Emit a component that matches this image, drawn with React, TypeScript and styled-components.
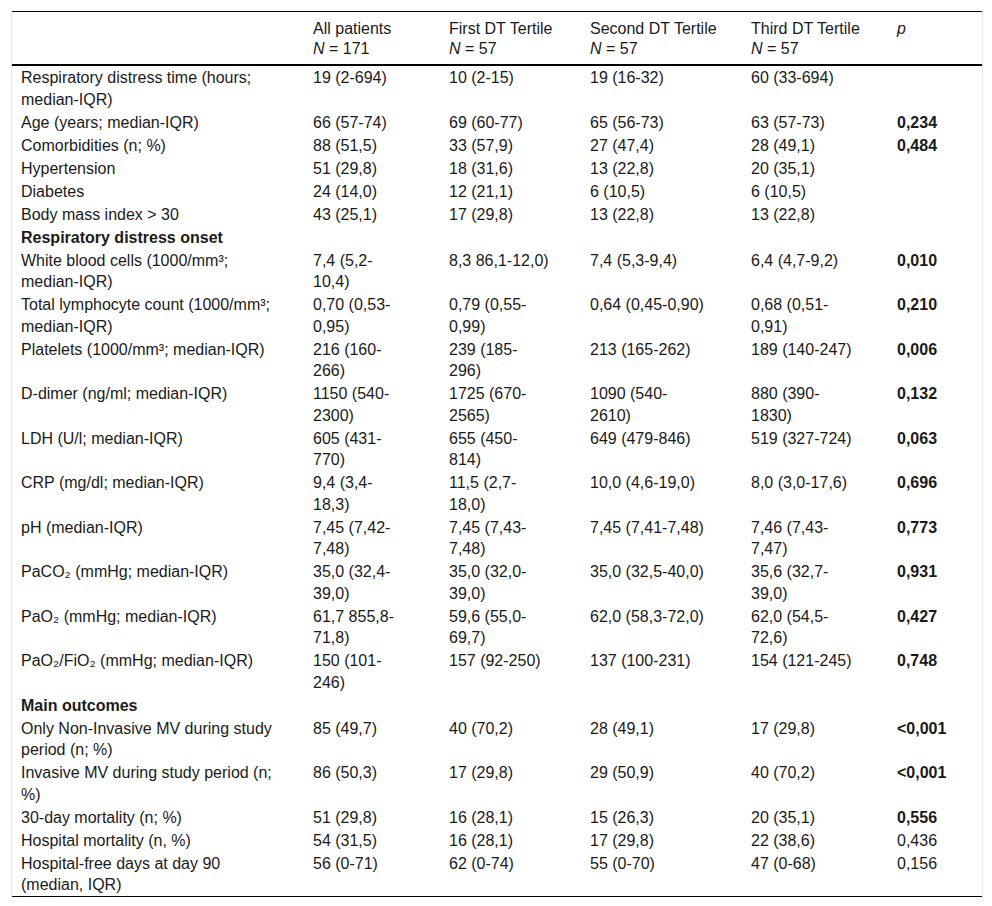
import React from 'react';
import styled, {createGlobalStyle} from "styled-components";

type Row =
    | { kind: 'section'; label: string }
    | { kind: 'data'; label: string; values: string[]; p?: string; bold?: boolean };

const rows: Row[] = [
    {kind: 'data', label: 'Respiratory distress time (hours; median-IQR)', values: ['19 (2-694)', '10 (2-15)', '19 (16-32)', '60 (33-694)']},
    {kind: 'data', label: 'Age (years; median-IQR)', values: ['66 (57-74)', '69 (60-77)', '65 (56-73)', '63 (57-73)'], p: '0,234', bold: true},
    {kind: 'data', label: 'Comorbidities (n; %)', values: ['88 (51,5)', '33 (57,9)', '27 (47,4)', '28 (49,1)'], p: '0,484', bold: true},
    {kind: 'data', label: 'Hypertension', values: ['51 (29,8)', '18 (31,6)', '13 (22,8)', '20 (35,1)']},
    {kind: 'data', label: 'Diabetes', values: ['24 (14,0)', '12 (21,1)', '6 (10,5)', '6 (10,5)']},
    {kind: 'data', label: 'Body mass index > 30', values: ['43 (25,1)', '17 (29,8)', '13 (22,8)', '13 (22,8)']},
    {kind: 'section', label: 'Respiratory distress onset'},
    {kind: 'data', label: 'White blood cells (1000/mm³; median-IQR)', values: ['7,4 (5,2-10,4)', '8,3 86,1-12,0)', '7,4 (5,3-9,4)', '6,4 (4,7-9,2)'], p: '0,010', bold: true},
    {kind: 'data', label: 'Total lymphocyte count (1000/mm³; median-IQR)', values: ['0,70 (0,53-0,95)', '0,79 (0,55-0,99)', '0,64 (0,45-0,90)', '0,68 (0,51-0,91)'], p: '0,210', bold: true},
    {kind: 'data', label: 'Platelets (1000/mm³; median-IQR)', values: ['216 (160-266)', '239 (185-296)', '213 (165-262)', '189 (140-247)'], p: '0,006', bold: true},
    {kind: 'data', label: 'D-dimer (ng/ml; median-IQR)', values: ['1150 (540-2300)', '1725 (670-2565)', '1090 (540-2610)', '880 (390-1830)'], p: '0,132', bold: true},
    {kind: 'data', label: 'LDH (U/l; median-IQR)', values: ['605 (431-770)', '655 (450-814)', '649 (479-846)', '519 (327-724)'], p: '0,063', bold: true},
    {kind: 'data', label: 'CRP (mg/dl; median-IQR)', values: ['9,4 (3,4-18,3)', '11,5 (2,7-18,0)', '10,0 (4,6-19,0)', '8,0 (3,0-17,6)'], p: '0,696', bold: true},
    {kind: 'data', label: 'pH (median-IQR)', values: ['7,45 (7,42-7,48)', '7,45 (7,43-7,48)', '7,45 (7,41-7,48)', '7,46 (7,43-7,47)'], p: '0,773', bold: true},
    {kind: 'data', label: 'PaCO₂ (mmHg; median-IQR)', values: ['35,0 (32,4-39,0)', '35,0 (32,0-39,0)', '35,0 (32,5-40,0)', '35,6 (32,7-39,0)'], p: '0,931', bold: true},
    {kind: 'data', label: 'PaO₂ (mmHg; median-IQR)', values: ['61,7 855,8-71,8)', '59,6 (55,0-69,7)', '62,0 (58,3-72,0)', '62,0 (54,5-72,6)'], p: '0,427', bold: true},
    {kind: 'data', label: 'PaO₂/FiO₂ (mmHg; median-IQR)', values: ['150 (101-246)', '157 (92-250)', '137 (100-231)', '154 (121-245)'], p: '0,748', bold: true},
    {kind: 'section', label: 'Main outcomes'},
    {kind: 'data', label: 'Only Non-Invasive MV during study period (n; %)', values: ['85 (49,7)', '40 (70,2)', '28 (49,1)', '17 (29,8)'], p: '<0,001', bold: true},
    {kind: 'data', label: 'Invasive MV during study period (n; %)', values: ['86 (50,3)', '17 (29,8)', '29 (50,9)', '40 (70,2)'], p: '<0,001', bold: true},
    {kind: 'data', label: '30-day mortality (n; %)', values: ['51 (29,8)', '16 (28,1)', '15 (26,3)', '20 (35,1)'], p: '0,556', bold: true},
    {kind: 'data', label: 'Hospital mortality (n, %)', values: ['54 (31,5)', '16 (28,1)', '17 (29,8)', '22 (38,6)'], p: '0,436'},
    {kind: 'data', label: 'Hospital-free days at day 90 (median, IQR)', values: ['56 (0-71)', '62 (0-74)', '55 (0-70)', '47 (0-68)'], p: '0,156'},
];

const groups = [
    {title: 'All patients', n: '171'},
    {title: 'First DT Tertile', n: '57'},
    {title: 'Second DT Tertile', n: '57'},
    {title: 'Third DT Tertile', n: '57'},
];

const colWidths = [292, 136, 141, 161, 146, 94];

export default function App() {
    return (
        <>
            <GlobalStyle/>
            <StyledFrame>
                <StyledTable>
                    <colgroup>
                        {colWidths.map((w, i) => <col key={i} style={{width: w}}/>)}
                    </colgroup>
                    <thead>
                    <tr>
                        <StyledHead/>
                        {groups.map(g => (
                            <StyledHead key={g.title}>
                                {g.title}<br/>
                                <i>N</i> = {g.n}
                            </StyledHead>
                        ))}
                        <StyledHead><i>p</i></StyledHead>
                    </tr>
                    </thead>
                    <tbody>
                    {rows.map(row => row.kind === 'section' ? (
                        <tr key={row.label}>
                            <StyledSection colSpan={6}>{row.label}</StyledSection>
                        </tr>
                    ) : (
                        <tr key={row.label}>
                            <StyledCell>{row.label}</StyledCell>
                            {row.values.map((v, i) => <StyledCell key={i}>{v}</StyledCell>)}
                            <StyledCell bold={row.bold}>{row.p}</StyledCell>
                        </tr>
                    ))}
                    </tbody>
                </StyledTable>
            </StyledFrame>
        </>
    );
}

const GlobalStyle = createGlobalStyle`
    body {
        margin: 0;
        background: #fff;
        font-family: "Liberation Sans", Arial, sans-serif;
        color: #1a1a1a;
    }
`

const StyledFrame = styled.div`
    margin: 11px;
    width: 970px;
    border-left: 1px solid #e6e6e6;
    border-right: 1px solid #e6e6e6;
`

const StyledTable = styled.table`
    width: 100%;
    table-layout: fixed;
    border-collapse: collapse;
    border-top: 1px solid #000;
    border-bottom: 1px solid #000;
    font-size: 16px;
    line-height: 21.5px;

    thead tr {
        border-bottom: 2px solid #000;
    }

    td:nth-child(1) { padding-right: 25px; }
    td:nth-child(2) { padding-right: 39px; }
    td:nth-child(3) { padding-right: 32px; }
    td:nth-child(4) { padding-right: 36px; }
    td:nth-child(5) { padding-right: 32px; }
    td:nth-child(6) { padding-right: 10px; }
`

const StyledHead = styled.th`
    text-align: left;
    vertical-align: top;
    font-weight: normal;
    line-height: 20px;
    padding: 7px 10px 5px 9px;
`

const StyledCell = styled.td<{ bold?: boolean }>`
    vertical-align: top;
    padding: 1px 10px 0.5px 9px;
    font-weight: ${p => p.bold ? 'bold' : 'normal'};
`

const StyledSection = styled.td`
    padding: 1px 9px 0.5px;
    font-weight: bold;
`
